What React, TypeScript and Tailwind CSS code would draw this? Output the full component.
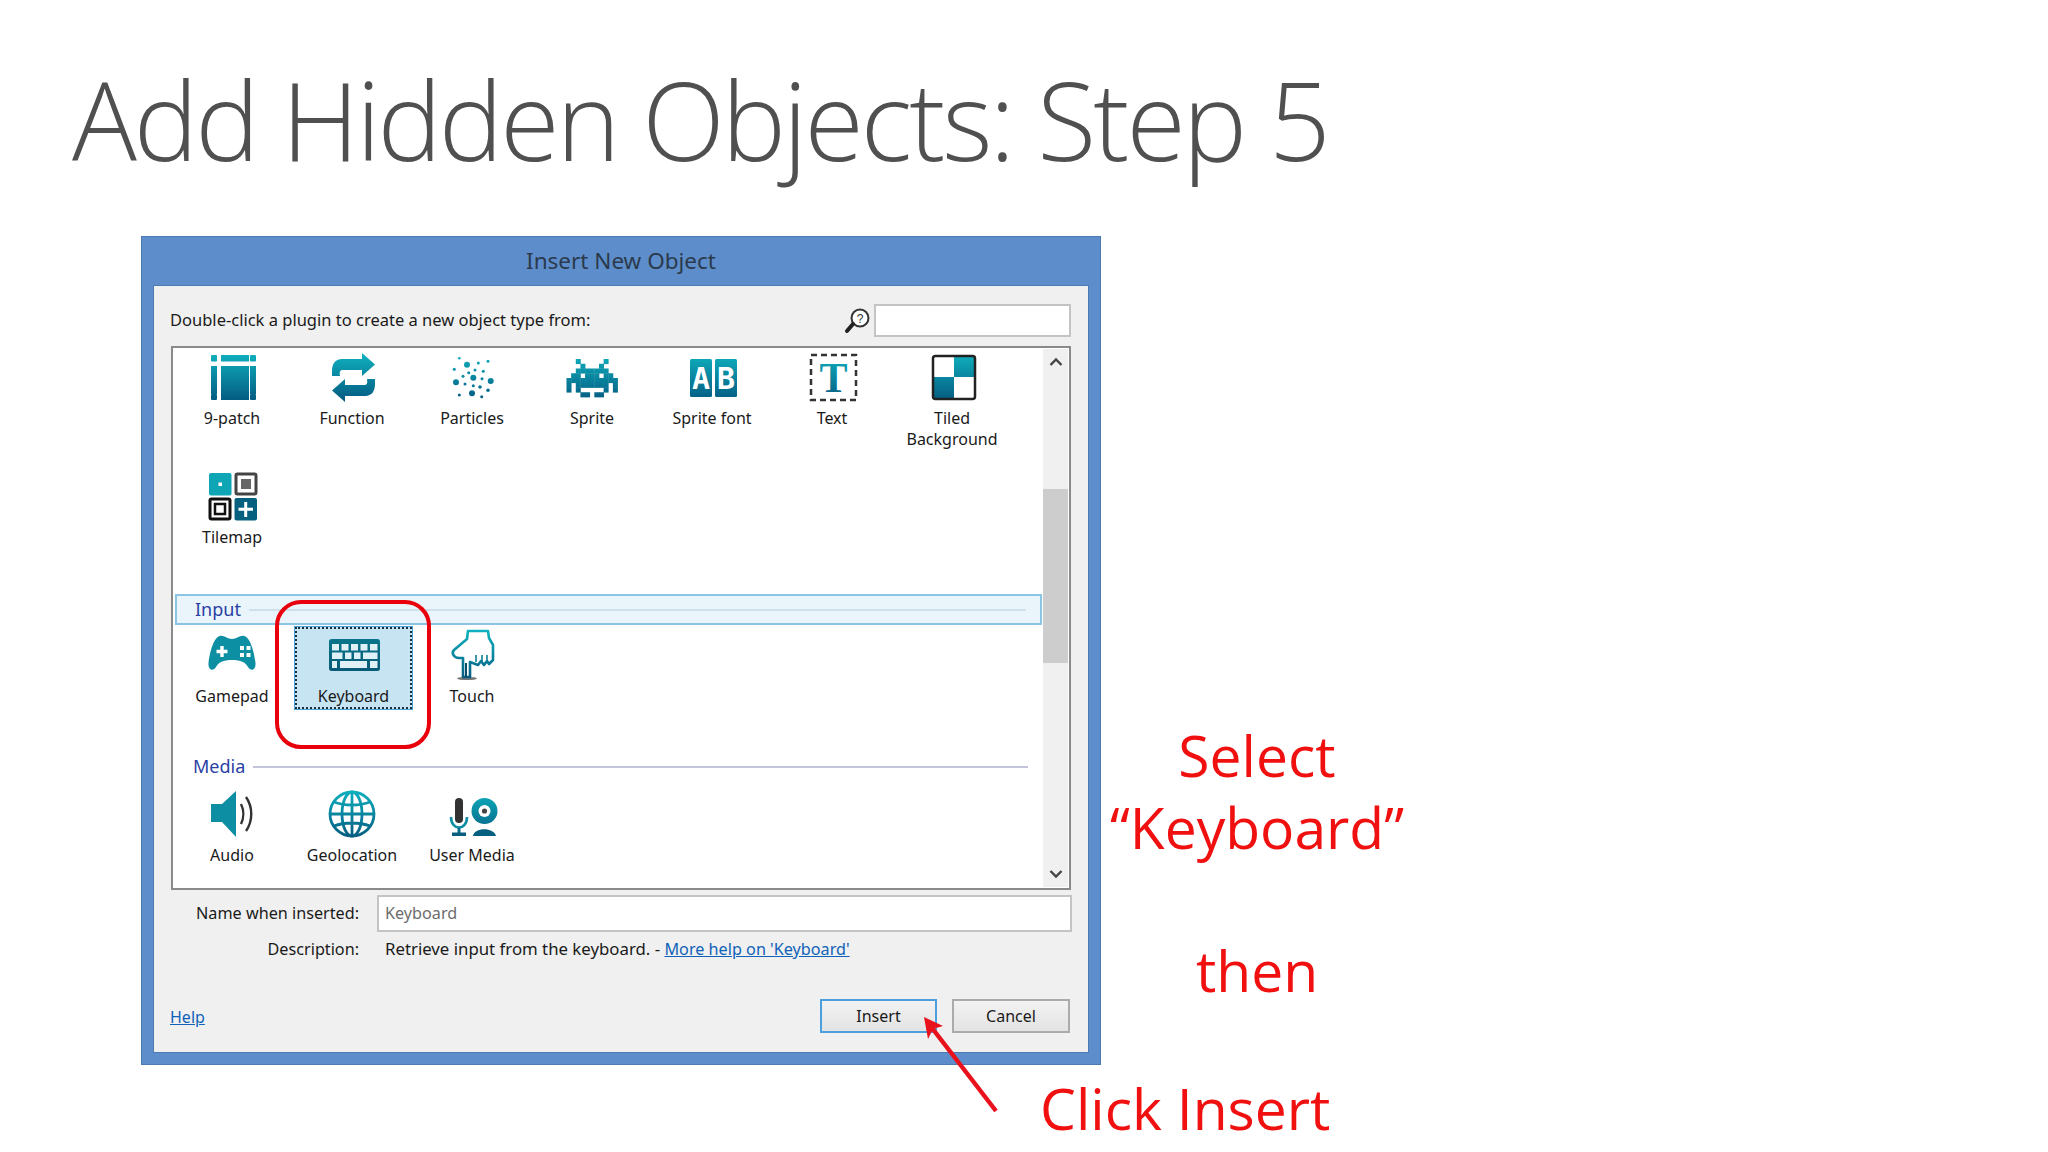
import type { ReactNode } from 'react';

const uiFont = "font-['Noto_Sans','Open_Sans',sans-serif]";

const invader = [
    '..#.....#..',
    '...#...#...',
    '..#######..',
    '.##.###.##.',
    '###########',
    '#.#######.#',
    '#.#.....#.#',
    '...##.##...',
];

const particles = [
    [11.3, 5.3, 1.3], [19, 11.7, 3], [30.3, 10, 1.5], [40, 8.3, 1.5], [6.3, 16.3, 1.5],
    [27, 17, 1.5], [35.3, 18.3, 1.5], [20.7, 19.7, 1.5], [25.3, 24.7, 3], [15, 23.3, 1.5],
    [34, 25.7, 1.5], [8, 29.3, 3], [42.7, 28, 3], [17, 31, 1.5], [25.3, 32.7, 1.5],
    [32, 34, 1.8], [24, 40.3, 3], [11.3, 42, 1.5], [40, 37.3, 1.8], [33.7, 43.7, 1.5],
];

// white keys of the keyboard icon: x, y, width, height
const keys = [
    [2, 13, 7, 6.5], [11.5, 13, 7, 6.5], [21, 13, 7, 6.5], [30.5, 13, 7, 6.5], [40, 13, 7.5, 6.5],
    [2, 21.5, 10.5, 6.5], [15, 21.5, 6.5, 6.5], [24, 21.5, 6.5, 6.5], [33, 21.5, 14.5, 6.5],
    [2, 30, 5, 7], [10, 30, 27, 7], [40, 30, 7.5, 7],
];

function Icon({ children }: { children: ReactNode }) {
    return (
        <svg viewBox="0 0 48 48" className="h-12 w-12 shrink-0 overflow-visible">
            {children}
        </svg>
    );
}

const icons: Record<string, ReactNode> = {
    patch: (
        <Icon>
            <g fill="url(#teal)">
                <rect x="3" y="2" width="6" height="6.5" rx="1" />
                <rect x="13" y="2" width="28" height="6.5" />
                <rect x="42" y="2" width="6" height="6.5" rx="1" />
                <rect x="3" y="13" width="6" height="28" />
                <rect x="13" y="13" width="28" height="28" />
                <rect x="42" y="13" width="6" height="28" />
                <rect x="3" y="41" width="6" height="6" rx="1" />
                <rect x="13" y="41" width="28" height="6" />
                <rect x="42" y="41" width="6" height="6" rx="1" />
            </g>
        </Icon>
    ),
    func: (
        <Icon>
            <g fill="url(#teal)">
                <path d="M47 11.5 L34 0 V6 H14 C7 6 4 11 4 18 L4 23 L12 23 C11 17 13 17 16 17 H34 V23 Z" />
                <path d="M4 37.5 L17 49 V43 H37 C44 43 47 38 47 31 L47 26 L39 26 C40 32 38 32 35 32 H17 V26 Z" />
            </g>
        </Icon>
    ),
    particles: (
        <Icon>
            <g fill="url(#teal)">
                {particles.map(([cx, cy, r]) => (
                    <circle key={`${cx}-${cy}`} cx={cx} cy={cy} r={r} />
                ))}
            </g>
        </Icon>
    ),
    sprite: (
        <Icon>
            <g fill="url(#teal)">
                {invader.flatMap((row, y) =>
                    row.split('').map((cell, x) =>
                        cell === '#' ? (
                            <rect key={`${x}-${y}`} x={x * 4.64 - 1.5} y={y * 4.75 + 6} width="5" height="5.1" />
                        ) : null,
                    ),
                )}
            </g>
        </Icon>
    ),
    font: (
        <Icon>
            <rect x="2" y="6" width="22" height="38" rx="1.5" fill="url(#teal)" />
            <rect x="27" y="6" width="22" height="38" rx="1.5" fill="url(#teal)" />
            <text x="13" y="36" textAnchor="middle" fontSize="30" fontWeight="700" fill="#fff" fontFamily="'DejaVu Sans Mono', monospace">A</text>
            <text x="38" y="36" textAnchor="middle" fontSize="30" fontWeight="700" fill="#fff" fontFamily="'DejaVu Sans Mono', monospace">B</text>
        </Icon>
    ),
    text: (
        <Icon>
            <rect x="3" y="2" width="45" height="45" fill="none" stroke="#333" strokeWidth="2.5" strokeDasharray="6 4" />
            <text x="25.5" y="39" textAnchor="middle" fontSize="42" fontWeight="700" fill="url(#teal)" fontFamily="'Liberation Serif', serif">T</text>
        </Icon>
    ),
    tiled: (
        <Icon>
            <rect x="4" y="2" width="44" height="45" rx="3" fill="#fff" />
            <rect x="26" y="3" width="21" height="21" fill="url(#teal)" />
            <rect x="5" y="24" width="21" height="22" fill="url(#teal)" />
            <rect x="5" y="3" width="42" height="43" rx="2.5" fill="none" stroke="#222" strokeWidth="2.5" />
        </Icon>
    ),
    tilemap: (
        <Icon>
            <rect x="1" y="1" width="22.5" height="22.5" rx="2" fill="#0ea5b5" />
            <rect x="10.5" y="10.5" width="3.5" height="3.5" fill="#fff" />
            <rect x="28" y="2" width="20" height="20" rx="1.5" fill="#fff" stroke="#444" strokeWidth="3" />
            <rect x="33" y="7" width="10" height="10" fill="#666" />
            <rect x="2" y="27" width="20" height="20" rx="1.5" fill="#fff" stroke="#111" strokeWidth="3" />
            <rect x="7" y="32" width="10" height="10" fill="#fff" stroke="#111" strokeWidth="2.5" />
            <rect x="26.5" y="26" width="22.5" height="22.5" rx="2" fill="#05607f" />
            <path d="M37.7 30 V45 M30.5 37.3 H45" stroke="#fff" strokeWidth="3" />
        </Icon>
    ),
    gamepad: (
        <Icon>
            <path
                d="M12 5 C16 4 19 8 24 8 C29 8 32 4 36 5 C42 6 46 20 47.5 32 C48 39 43 41 40 36 C37 31 33 29 24 29 C15 29 11 31 8 36 C5 41 0 39 0.5 32 C2 20 6 6 12 5 Z"
                fill="#0c8fa3"
            />
            <path d="M14 15 V26 M8.5 20.5 H19.5" stroke="#fff" strokeWidth="3.4" />
            <g fill="#fff">
                <rect x="32" y="15" width="4" height="4" />
                <rect x="38.5" y="15" width="4" height="4" />
                <rect x="32" y="22" width="4" height="4" />
                <rect x="38.5" y="22" width="4" height="4" />
            </g>
        </Icon>
    ),
    keyboard: (
        <Icon>
            <rect x="-1" y="8" width="51" height="32" rx="3" fill="url(#teal)" />
            <rect x="-1" y="8" width="51" height="32" rx="3" fill="#0a4f68" fillOpacity="0.55" />
            <g fill="#dff0f7">
                {keys.map(([x, y, width, height]) => (
                    <rect key={`${x}-${y}`} x={x} y={y} width={width} height={height} />
                ))}
            </g>
        </Icon>
    ),
    touch: (
        <Icon>
            <ellipse cx="19" cy="47.5" rx="10" ry="1.6" fill="#777" />
            <path
                d="M20 0 H40 L41 7 L45 14 V29 L41 33 L39 30 L36 34 L33 30 L30 34 L22 31 V46 H15 V27 L11 27 C6 27 3 22 6 19 L19 8 Z"
                fill="#fff"
                stroke="url(#teal)"
                strokeWidth="2.6"
                strokeLinejoin="round"
            />
            <path d="M18 32 V46" stroke="#0a4f68" strokeWidth="2" />
            <path d="M28 24 V31 M34 24 V31 M39 24 V30" stroke="#0a7f95" strokeWidth="1.6" />
        </Icon>
    ),
    audio: (
        <Icon>
            <path d="M3 14 H14 L28 1 V47 L14 32 H3 Z" fill="#0d8ea3" />
            <path d="M33 14 C36 20 36 28 33 34 M38 7 C45 17 45 31 38 41" fill="none" stroke="#333" strokeWidth="2.4" />
        </Icon>
    ),
    geo: (
        <Icon>
            <g fill="none" stroke="url(#teal)" strokeWidth="2.8">
                <circle cx="24" cy="24" r="22" />
                <ellipse cx="24" cy="24" rx="10" ry="22" />
                <path d="M24 2 V46 M2 24 H46 M6 12 C16 16 32 16 42 12 M6 36 C16 32 32 32 42 36" />
            </g>
        </Icon>
    ),
    media: (
        <Icon>
            <rect x="7" y="8" width="8" height="25" rx="4" fill="#333" />
            <path d="M3 27 C3 41 19 41 19 27" fill="none" stroke="#0d8ea3" strokeWidth="2.6" />
            <rect x="9.5" y="38" width="3" height="6" fill="#0a6f88" />
            <rect x="4" y="42.5" width="14" height="3.5" fill="#0a5f7f" />
            <path d="M25 46 C26 37 46 37 48 46 Z" fill="#075f7f" />
            <circle cx="36.5" cy="21" r="13" fill="url(#teal)" />
            <circle cx="36.5" cy="21" r="6" fill="#fff" />
            <circle cx="36.5" cy="21" r="2.6" fill="#444" />
        </Icon>
    ),
};

function Tile({ icon, label, selected }: { icon: string; label: string; selected?: boolean }) {
    return (
        <div className="flex w-[120px] flex-col items-center">
            <div
                className={
                    selected
                        ? 'ml-[3px] mt-[2px] flex h-[82px] w-[117px] flex-col items-center border-2 border-dotted border-[#1d2d3a] bg-[#c7e4f3] pt-[2px] outline outline-1 outline-[#4aa3d8]'
                        : 'flex flex-col items-center pt-[6px]'
                }
            >
                {icons[icon]}
                <div className="mt-[7px] whitespace-pre-line text-center text-[16px] leading-[21px] text-[#1a1a1a]">
                    {label}
                </div>
            </div>
        </div>
    );
}

function SectionHead({ label, active }: { label: string; active?: boolean }) {
    return (
        <div
            className={`ml-[2px] flex h-[31px] w-[867px] items-center pl-[18px] pr-[14px] ${
                active ? 'border-2 border-[#8cc4e4] bg-[#eaf5fb]' : ''
            }`}
        >
            <span className="text-[18px] text-[#2b3fa3]">{label}</span>
            <div className={`ml-2 h-[2px] flex-1 ${active ? 'bg-[#cfdfec]' : 'bg-[#c3c3dc]'}`} />
        </div>
    );
}

function PluginList() {
    return (
        <div className="ml-[1px] flex h-[544px] w-[900px] border-2 border-[#8a8a8a] bg-white">
            <div className="w-[870px]">
                <div className="-ml-[1px] -mt-[1px] grid w-[840px] grid-cols-7">
                    <div className="h-[119px]"><Tile icon="patch" label="9-patch" /></div>
                    <Tile icon="func" label="Function" />
                    <Tile icon="particles" label="Particles" />
                    <Tile icon="sprite" label="Sprite" />
                    <Tile icon="font" label="Sprite font" />
                    <Tile icon="text" label="Text" />
                    <Tile icon="tiled" label={'Tiled\nBackground'} />
                    <div className="h-[128px]"><Tile icon="tilemap" label="Tilemap" /></div>
                </div>
                <SectionHead label="Input" active />
                <div className="-ml-[1px] flex h-[127px]">
                    <Tile icon="gamepad" label="Gamepad" />
                    <Tile icon="keyboard" label="Keyboard" selected />
                    <Tile icon="touch" label="Touch" />
                </div>
                <div className="-mt-[1px]">
                    <SectionHead label="Media" />
                </div>
                <div className="-ml-[1px] flex pt-[2px]">
                    <Tile icon="audio" label="Audio" />
                    <Tile icon="geo" label="Geolocation" />
                    <Tile icon="media" label="User Media" />
                </div>
            </div>
            <div className="my-[1px] flex w-[25px] flex-col bg-[#f0f0f0]">
                <div className="h-[140px] pt-[8px]">
                    <svg viewBox="0 0 14 10" className="mx-auto h-[10px] w-[14px]">
                        <path d="M1.5 8 L7 2.5 L12.5 8" fill="none" stroke="#444" strokeWidth="2.4" />
                    </svg>
                </div>
                <div className="h-[174px] bg-[#cdcdcd]" />
                <div className="flex flex-1 items-end pb-[8px]">
                    <svg viewBox="0 0 14 10" className="mx-auto h-[10px] w-[14px]">
                        <path d="M1.5 2 L7 7.5 L12.5 2" fill="none" stroke="#444" strokeWidth="2.4" />
                    </svg>
                </div>
            </div>
        </div>
    );
}

function Dialog() {
    return (
        <div className={`${uiFont} flex h-[829px] w-[960px] shrink-0 flex-col border border-[#4c7bb2] bg-[#5d8ecb] px-[11px] pb-[11px]`}>
            <div className="flex h-[48px] items-center justify-center text-[22.5px] text-[#2b3a4c]">
                Insert New Object
            </div>
            <div className="flex flex-1 flex-col border border-[#4c7bb2] bg-[#f0f0f0] pl-[16px]">
                <div className="flex h-[60px] items-center pt-[9px]">
                    <span className="text-[16.5px] text-[#1a1a1a]">Double-click a plugin to create a new object type from:</span>
                    <svg viewBox="0 0 26 26" className="ml-auto mr-[4px] h-[26px] w-[26px]">
                        <circle cx="16" cy="10" r="8.5" fill="#fff" stroke="#333" strokeWidth="2" />
                        <path d="M9 16 L3 23" stroke="#222" strokeWidth="4" strokeLinecap="round" />
                        <text x="16" y="14.5" textAnchor="middle" fontSize="12" fill="#333" fontFamily="'Liberation Sans', sans-serif">?</text>
                    </svg>
                    <div className="mr-[17px] h-[33px] w-[197px] border-2 border-[#c4c4c4] bg-white" />
                </div>
                <PluginList />
                <div className="mt-[5px] flex items-center">
                    <div className="w-[189px] text-right text-[16.2px] text-[#1a1a1a]">Name when inserted:</div>
                    <div className="ml-[18px] flex h-[37px] w-[695px] items-center border-2 border-[#c4c4c4] bg-white pb-[1px] pl-[6px] text-[16.2px] text-[#6d6d6d]">
                        Keyboard
                    </div>
                </div>
                <div className="mt-[4px] flex items-center text-[16.8px] text-[#1a1a1a]">
                    <div className="w-[189px] text-right text-[16.2px]">Description:</div>
                    <div className="ml-[26px]">
                        Retrieve input from the keyboard. - <span className="text-[16.2px] text-[#0f62b8] underline">More help on 'Keyboard'</span>
                    </div>
                </div>
                <div className="mt-auto mb-[19px] flex items-center">
                    <span className="pt-[2px] text-[16px] text-[#0f62b8] underline">Help</span>
                    <button className="ml-auto h-[34px] w-[117px] border-2 border-[#4a9fe0] bg-gradient-to-b from-[#f2f2f2] to-[#e3e3e3] text-[16px] text-[#1a1a1a]">
                        Insert
                    </button>
                    <button className="ml-[15px] mr-[18px] h-[34px] w-[118px] border-2 border-[#ababab] bg-gradient-to-b from-[#f2f2f2] to-[#e3e3e3] text-[16px] text-[#1a1a1a]">
                        Cancel
                    </button>
                </div>
            </div>
        </div>
    );
}

export default function App() {
    return (
        <div className="relative h-[1152px] w-[2048px] overflow-hidden bg-white font-['Open_Sans',sans-serif]">
            <svg className="block h-0 w-0">
                <defs>
                    <linearGradient id="teal" gradientUnits="userSpaceOnUse" x1="0" y1="0" x2="0" y2="48">
                        <stop offset="0" stopColor="#0fb2bf" />
                        <stop offset="1" stopColor="#045a80" />
                    </linearGradient>
                </defs>
            </svg>

            <h1 className="h-[236px] whitespace-nowrap pl-[72px] pt-[50px] text-[108px] font-light leading-[140px] tracking-[-3px] text-[#505050]">
                Add Hidden Objects: Step 5
            </h1>

            <div className="flex pl-[141px]">
                <Dialog />
                <div className="w-[312px] pt-[483px] text-center text-[57px] leading-[72px] text-[#f01010]">
                    <div>Select</div>
                    <div className="whitespace-nowrap">“Keyboard”</div>
                    <div className="h-[71px]" />
                    <div>then</div>
                </div>
            </div>

            <div className="mt-[7px] pl-[1040px] text-[57px] leading-[72px] text-[#f01010]">Click Insert</div>

            {/* red callouts drawn over the dialog */}
            <div className="absolute left-[275px] top-[600px] h-[149px] w-[156px] rounded-[26px] border-[4px] border-[#e8000c]" />
            <svg className="absolute left-[900px] top-[1000px] h-[120px] w-[110px]" viewBox="0 0 110 120">
                <path d="M96 111 L32 28" stroke="#e8111c" strokeWidth="4.5" />
                <path d="M24 17 L43 26 L33 29 L28 39 Z" fill="#e8111c" />
            </svg>
        </div>
    );
}
